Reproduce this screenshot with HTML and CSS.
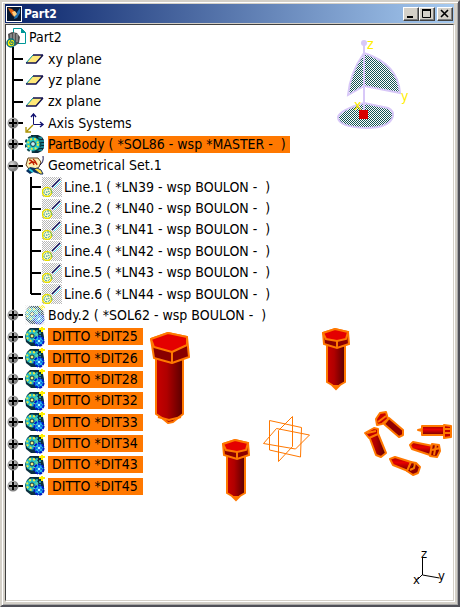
FILE: index.html
```html
<!DOCTYPE html>
<html lang="en">
<head>
    <meta charset="UTF-8">
    <meta name="viewport" content="width=device-width, initial-scale=1.0">
    <title>Part2</title>
    <link rel="stylesheet" href="styles.css">
</head>
<body>
    <svg class="defs" aria-hidden="true">
        <defs>
            <radialGradient id="ball" cx="40%" cy="35%"><stop offset="0" stop-color="#e0e0e0"/><stop offset="1" stop-color="#808080"/></radialGradient>
            <linearGradient id="shaft"><stop offset="0" stop-color="#c80000"/><stop offset="0.4" stop-color="#b00000"/><stop offset="1" stop-color="#580000"/></linearGradient>
            <linearGradient id="shaftFlat" x2="0" y2="1"><stop offset="0" stop-color="#a00000"/><stop offset="0.4" stop-color="#e80000"/><stop offset="1" stop-color="#700000"/></linearGradient>
            <pattern id="mesh" width="2" height="2" patternUnits="userSpaceOnUse"><rect width="2" height="2" fill="#fff"/><path d="M0 0h1v1h-1zM1 1h1v1h-1z" fill="#145454"/></pattern>
            <pattern id="grayMesh" width="2" height="2" patternUnits="userSpaceOnUse"><path d="M0 0h1v1h-1zM1 1h1v1h-1z" fill="#b8b8b8"/></pattern>
            <pattern id="whiteMesh" width="2" height="2" patternUnits="userSpaceOnUse"><path d="M0 0h1v1h-1zM1 1h1v1h-1z" fill="#fff"/></pattern>
        </defs>
        <symbol id="plus" viewBox="0 0 12 12"><circle cx="6" cy="6" r="5.5" fill="url(#ball)"/><path d="M2 6h8M6 2v8" stroke="#000" stroke-width="2"/></symbol>
        <symbol id="minus" viewBox="0 0 12 12"><circle cx="6" cy="6" r="5.5" fill="url(#ball)"/><path d="M2 6h8" stroke="#000" stroke-width="2"/></symbol>
        <symbol id="plane" viewBox="0 0 20 20"><path d="M1 14 8 6h10l-7 8z" fill="#ffe878"/><path d="M1 14 8 6" stroke="#009898" fill="none"/><path d="M8 6h10M18 6l-7 8H1" stroke="#101050" stroke-width="1.4" fill="none"/></symbol>
        <symbol id="axis" viewBox="0 0 20 20"><path d="M8.5 2v9.500H18" stroke="#101070" fill="none"/><path d="m6 4 2.500-3L11 4M15 9l3 2.500-3 2.500" stroke="#101070" stroke-width="1.400" fill="none"/><path d="m8 12-6 6M1 14v5h5" stroke="#a89000" stroke-width="1.3" fill="none"/></symbol>
        <symbol id="gear" viewBox="0 0 20 20">
            <path d="M6 1h7l4 2 2 3v8l-2 3-4 2H7z" fill="#082838"/>
            <path d="M13 4h4M14 7h5M14 10h5M14 13h5M12 16h5" stroke="#20a0b0" stroke-width="1.5"/>
            <circle cx="8" cy="10" r="7.5" fill="none" stroke="#0c4850" stroke-width="2" stroke-dasharray="3 2"/>
            <circle cx="8" cy="10" r="6.8" fill="#20c8c8"/>
            <circle cx="8" cy="10" r="5" fill="none" stroke="#e8e840" stroke-width="2" stroke-dasharray="2 2"/>
            <circle cx="8" cy="10" r="2.4" fill="#c8f0f0" stroke="#103040"/>
        </symbol>
        <symbol id="ditto" viewBox="0 0 20 20">
            <path d="M5 1h9l4 4 1 5v5l-3 4H6l-5-4-1-6 2-5z" fill="#0a3040"/>
            <circle cx="7" cy="9" r="6.5" fill="#20bcc4"/>
            <circle cx="7" cy="9" r="5" fill="none" stroke="#e8e840" stroke-width="2" stroke-dasharray="2 2"/>
            <circle cx="7" cy="9" r="2" fill="#eef080" stroke="#103040"/>
            <path d="M12 3v8M15 5v5" stroke="#30c8c8" stroke-width="1.500" stroke-dasharray="2 1"/>
            <circle cx="14" cy="14" r="4.6" fill="#20b8f0" stroke="#0018c8" stroke-width="2" stroke-dasharray="3 1"/>
            <path d="M11 14h6M14 11v6" stroke="#0018c8"/><circle cx="14" cy="14" r="1.3" fill="#b0ffff"/>
            <path d="M14 2h6M17 0v5" stroke="#fff000" stroke-width="2"/>
        </symbol>
        <symbol id="body" viewBox="0 0 20 20"><rect width="20" height="20" fill="url(#grayMesh)"/><use href="#ditto" opacity="0.75"/><rect width="20" height="20" fill="url(#whiteMesh)" opacity="0.8"/></symbol>
        <symbol id="set" viewBox="0 0 20 20">
            <path d="M3 2h10l3 4-2 5-3 2H4L1 9z" fill="#fff0b0" stroke="#604020"/>
            <path d="M4 4q3 0 5 5M8 3q3 2 4 6M4 8q4-4 8 0" stroke="#c02000" fill="none" stroke-width="1.3"/>
            <path d="M18 0q1 6-3 9" stroke="#101050" fill="none"/>
            <path d="m1 15 4-4 5 1 4 6-6-2-3 2z" fill="#083060"/><path d="m9 13 6 5h3l-2-4-4-2z" fill="#ffe040" stroke="#103060"/><path d="m4 13 4 3" stroke="#20c8d8" stroke-width="2"/>
        </symbol>
        <symbol id="line" viewBox="0 0 20 20">
            <rect width="20" height="20" fill="url(#grayMesh)"/>
            <path d="m10 10 8-8" stroke="#101060" stroke-width="1.3"/><path d="m12 11 7-7" stroke="#50d8f0"/>
            <circle cx="5" cy="15" r="4.500" fill="#fffbd0" stroke="#e8e000" stroke-width="1.500"/>
            <path d="M5 16q-1-2 1-2 3 1 1 3-3 2-5-1 0-4 4-4 4 0 4 4" stroke="#209898" fill="none" stroke-dasharray="2 1"/>
        </symbol>
        <symbol id="smallBolt" viewBox="0 0 28 64">
            <path d="M5 18v37l5 3 4 4 4-4 5-3V18z" fill="url(#shaft)" stroke="#ff7800" stroke-width="2"/>
            <path d="m10 58 4 4 4-4z" fill="#ff7800"/>
            <path d="M1 6 13 2l13 3 1 12-12 4-13-4z" fill="#8c0000" stroke="#ff7800" stroke-width="2"/>
            <path d="M1 6 13 2l13 3-2 7-9 2-11-2z" fill="#e40000" stroke="#ff7800" stroke-width="2"/>
            <path d="M15 14v7" stroke="#ff7800" stroke-width="2"/>
        </symbol>
    </svg>

    <div class="window">
        <header class="title-bar">
            <svg class="app-icon" viewBox="0 0 16 16" aria-hidden="true"><rect width="16" height="16" fill="#fff"/><rect x="1" y="1" width="14" height="14" fill="#081830"/><path d="m2 2 4 1 4 4-3 3-3-4z" fill="#e06010"/><path d="m8 13 1-4 5-7v5l-3 5z" fill="#2070b0"/><path d="m6 6 3-1 2 3-3 3z" fill="#ffd080"/></svg>
            <h1>Part2</h1>
            <div class="window-buttons">
                <button type="button" aria-label="Minimize"><svg viewBox="0 0 12 10"><path d="M3 8h6" stroke="#000" stroke-width="2"/></svg></button>
                <button type="button" aria-label="Maximize"><svg viewBox="0 0 12 10"><path d="M2.500 1.500h8v7h-8z" fill="none" stroke="#000"/><path d="M2 1h9" stroke="#000" stroke-width="2"/></svg></button>
                <button type="button" class="close" aria-label="Close"><svg viewBox="0 0 12 10"><path d="m3 1 7 7M10 1 3 8" stroke="#000" stroke-width="1.600"/></svg></button>
            </div>
        </header>

        <main class="viewport">
            <ul class="tree">
                <li class="root"><svg class="icon" viewBox="0 0 20 20"><path d="M7.500.500h8l4 4v11h-12z" fill="#fff" stroke="#009898"/><path d="M15 0v5h5z" fill="#009898"/><path d="m2 6 4-2 5 1 3 4-1 6-4 3-6-2z" fill="#505050"/><path d="M5 6v8M8 5v9M11 6v8" stroke="#bbb"/><circle cx="5" cy="15" r="4" fill="#fff000" stroke="#087080" stroke-width="1.500"/><path d="M5 15q0-2 2-1 1 3-2 3-3-2 0-5" fill="none" stroke="#107080"/></svg><span>Part2</span></li>
                <li><svg class="icon"><use href="#plane"/></svg><span>xy plane</span></li>
                <li><svg class="icon"><use href="#plane"/></svg><span>yz plane</span></li>
                <li><svg class="icon"><use href="#plane"/></svg><span>zx plane</span></li>
                <li><button type="button" class="toggle" aria-label="Expand"><svg><use href="#plus"/></svg></button><svg class="icon"><use href="#axis"/></svg><span>Axis Systems</span></li>
                <li><button type="button" class="toggle" aria-label="Expand"><svg><use href="#plus"/></svg></button><svg class="icon"><use href="#gear"/></svg><span class="selected">PartBody ( *SOL86 - wsp *MASTER -  )</span></li>
                <li><button type="button" class="toggle" aria-label="Collapse"><svg><use href="#minus"/></svg></button><svg class="icon"><use href="#set"/></svg><span>Geometrical Set.1</span></li>
                <li class="child"><svg class="icon"><use href="#line"/></svg><span>Line.1 ( *LN39 - wsp BOULON -  )</span></li>
                <li class="child"><svg class="icon"><use href="#line"/></svg><span>Line.2 ( *LN40 - wsp BOULON -  )</span></li>
                <li class="child"><svg class="icon"><use href="#line"/></svg><span>Line.3 ( *LN41 - wsp BOULON -  )</span></li>
                <li class="child"><svg class="icon"><use href="#line"/></svg><span>Line.4 ( *LN42 - wsp BOULON -  )</span></li>
                <li class="child"><svg class="icon"><use href="#line"/></svg><span>Line.5 ( *LN43 - wsp BOULON -  )</span></li>
                <li class="child last"><svg class="icon"><use href="#line"/></svg><span>Line.6 ( *LN44 - wsp BOULON -  )</span></li>
                <li><button type="button" class="toggle" aria-label="Expand"><svg><use href="#plus"/></svg></button><svg class="icon"><use href="#body"/></svg><span>Body.2 ( *SOL62 - wsp BOULON -  )</span></li>
                <li><button type="button" class="toggle" aria-label="Expand"><svg><use href="#plus"/></svg></button><svg class="icon"><use href="#ditto"/></svg><span class="selected ditto">DITTO *DIT25</span></li>
                <li><button type="button" class="toggle" aria-label="Expand"><svg><use href="#plus"/></svg></button><svg class="icon"><use href="#ditto"/></svg><span class="selected ditto">DITTO *DIT26</span></li>
                <li><button type="button" class="toggle" aria-label="Expand"><svg><use href="#plus"/></svg></button><svg class="icon"><use href="#ditto"/></svg><span class="selected ditto">DITTO *DIT28</span></li>
                <li><button type="button" class="toggle" aria-label="Expand"><svg><use href="#plus"/></svg></button><svg class="icon"><use href="#ditto"/></svg><span class="selected ditto">DITTO *DIT32</span></li>
                <li><button type="button" class="toggle" aria-label="Expand"><svg><use href="#plus"/></svg></button><svg class="icon"><use href="#ditto"/></svg><span class="selected ditto">DITTO *DIT33</span></li>
                <li><button type="button" class="toggle" aria-label="Expand"><svg><use href="#plus"/></svg></button><svg class="icon"><use href="#ditto"/></svg><span class="selected ditto">DITTO *DIT34</span></li>
                <li><button type="button" class="toggle" aria-label="Expand"><svg><use href="#plus"/></svg></button><svg class="icon"><use href="#ditto"/></svg><span class="selected ditto">DITTO *DIT43</span></li>
                <li><button type="button" class="toggle" aria-label="Expand"><svg><use href="#plus"/></svg></button><svg class="icon"><use href="#ditto"/></svg><span class="selected ditto">DITTO *DIT45</span></li>
            </ul>

            <!-- 3D model -->
            <svg class="model" viewBox="146 325 308 180">
                <g stroke="#ff7800" stroke-width="2" stroke-linejoin="round">
                    <path d="M156 358v56l6 4 6 5 5-1 5-4 5-4V358z" fill="url(#shaft)"/>
                    <path d="m158 417 11 3 12-3" fill="none"/>
                    <path d="m151 339 17-6 19 4 2 20-17 6-18-5z" fill="#880000"/>
                    <path d="m151 339 17-6 19 4v8l-15 7-18-5z" fill="#e40000"/>
                    <path d="M172 352v10" fill="none"/>
                </g>
                <use href="#smallBolt" x="222" y="438" width="28" height="64"/>
                <use href="#smallBolt" x="322" y="327" width="28" height="64"/>
                <path d="m269.500 420.500 32 7-1 29.500-31-7zM292.500 416.500v30l-14 15v-31zM263.500 443.500l13-15 33 6.500-14 14z" fill="none" stroke="#ff7800"/>
                <g stroke="#ff7800" stroke-width="2" stroke-linejoin="round">
                    <path d="m418 430 4-1v-3h22v9h-22v-4z" fill="url(#shaftFlat)"/>
                    <path d="m444 425 7 1v11l-7 1z" fill="#c00000"/><path d="M445 429h6M445 433h6"/>
                    <path d="m410 445 3-3 20 4-3 9-18-6z" fill="url(#shaftFlat)"/>
                    <path d="m432 444 7 1 1 6-3 6-7-1z" fill="#900000"/><path d="m432 450 8-2M436 445l-2 10"/>
                    <path d="m390 459 5-2 16 5-3 9-15-6z" fill="url(#shaftFlat)"/>
                    <path d="m411 462 5 1 4 4-2 6-5 2-6-4z" fill="#900000"/><path d="m410 470 4-2 1-5"/>
                    <path d="m389 418 14 12v5l-4 2-15-13z" fill="#900000"/>
                    <path d="m376 419 4-6 6-1 2 7-6 5-5 1z" fill="#c80000"/><path d="m378 422 8-6"/>
                    <path d="m377 431 9 22-5 4-5-2-7-19z" fill="url(#shaft)"/>
                    <path d="m365 433 9-5 4 1v5l-9 4z" fill="#c00000"/><path d="m367 433 9-2"/>
                </g>
            </svg>

            <svg class="compass" viewBox="334 33 80 97">
                <path d="M364 53q34 11 36 40l-36-7zM364 53q-14 20-16 42l16-9z" fill="url(#mesh)" stroke="#d8c8f8" stroke-width="2"/>
                <path d="M364 103l24 5q6 3 5 8-3 12-27 12-28-1-28-11 2-7 26-14z" fill="url(#mesh)" stroke="#d8c8f8" stroke-width="2"/>
                <path d="M364 44v70" stroke="#d8c8f8" stroke-width="2"/>
                <circle cx="364" cy="43" r="3" fill="#d8c8f8"/>
                <text x="354" y="110">x</text>
                <rect x="359" y="110" width="9" height="9" fill="#d80000"/>
                <text x="367" y="49">z</text>
                <text x="401" y="101">y</text>
            </svg>

            <svg class="triad" viewBox="410 545 40 44">
                <path d="M422.500 557v17l17 3M422 574l-4 4" fill="none" stroke="#000"/>
                <text x="421" y="557">z</text>
                <text x="438" y="579">y</text>
                <text x="413" y="583">x</text>
            </svg>
        </main>
    </div>
</body>
</html>
```
FILE: styles.css
```css
* {
    box-sizing: border-box;
}

body {
    margin: 0;
    font-family: "DejaVu Sans Condensed", "DejaVu Sans", Tahoma, sans-serif;
    font-size: 14px;
    color: #000;
    background-color: #d4d0c8;
}

button {
    padding: 0;
    border: 0;
}

.defs {
    position: absolute;
    width: 0;
    height: 0;
}

.window {
    display: flex;
    flex-direction: column;
    min-height: 100vh;
    padding: 2px 4px 4px 3px;
    border: 2px solid;
    border-color: #d4d0c8 #505058 #505058 #d4d0c8;
    box-shadow: inset 1px 1px #fff, inset -1px -1px #a8a8a8;
    background-color: #d4d0c8;
}

.title-bar {
    display: flex;
    align-items: center;
    height: 19px;
    padding: 0 1px;
    background: linear-gradient(to right, #0a246a, #a6caf0);
}

.app-icon {
    width: 16px;
    height: 16px;
}

.title-bar h1 {
    flex: 1;
    margin: 0 2px;
    font-size: 12px;
    line-height: 18px;
    color: #fff;
}

.window-buttons {
    display: flex;
}

.window-buttons button {
    width: 16px;
    height: 14px;
    border: 1px solid;
    border-color: #fff #404040 #404040 #fff;
    box-shadow: inset -1px -1px #808080;
    background-color: #d4d0c8;
}

.window-buttons .close {
    margin-left: 2px;
}

.window-buttons svg {
    display: block;
    width: 12px;
    height: 10px;
}

.viewport {
    position: relative;
    flex: 1;
    margin-top: 1px;
    border: 1px solid;
    border-color: #404040 #d4d0c8 #d4d0c8 #404040;
    box-shadow: 1px 1px #fff;
    background-color: #fff;
    overflow: hidden;
}

/* specification tree */
.tree {
    position: relative;
    display: grid;
    grid-auto-rows: 1fr;
    height: 470px;
    margin: 2px 0 0;
    padding: 0;
    list-style: none;
}

.tree::before {
    content: "";
    position: absolute;
    top: 20px;
    bottom: 11px;
    left: 6px;
    width: 2px;
    background-color: #000;
}

.tree li {
    position: relative;
    display: flex;
    align-items: center;
    padding-left: 19px;
    white-space: pre;
}

.tree li::before {
    content: "";
    position: absolute;
    left: 8px;
    width: 9px;
    height: 2px;
    background-color: #000;
}

.tree .root {
    padding-left: 0;
}

.tree .root::before {
    display: none;
}

.tree .child {
    padding-left: 36px;
}

.tree .child::before {
    left: 25px;
    width: 10px;
}

.tree .child::after {
    content: "";
    position: absolute;
    top: 0;
    bottom: 0;
    left: 24px;
    width: 2px;
    background-color: #000;
}

.tree .last::after {
    bottom: 50%;
}

.toggle {
    position: absolute;
    left: 1px;
    width: 12px;
    height: 12px;
    background: none;
}

.toggle svg {
    display: block;
    width: 12px;
    height: 12px;
}

.icon {
    width: 20px;
    height: 20px;
    margin-right: 3px;
}

.child .icon {
    margin-right: 2px;
}

.tree span {
    line-height: 17px;
}

.selected {
    padding-right: 4px;
    background-color: #ff7800;
}

.ditto {
    min-width: 95px;
    padding-left: 4px;
}

/* drawings over the tree pane */
.model,
.compass,
.triad {
    position: absolute;
}

.model {
    top: 300px;
    left: 140px;
    width: 308px;
    height: 180px;
}

.compass {
    top: 8px;
    right: 39px;
    width: 80px;
    height: 97px;
    font-size: 14px;
    fill: #ffee00;
}

.triad {
    right: 3px;
    bottom: 10px;
    width: 40px;
    height: 44px;
    font-size: 13px;
}
```
